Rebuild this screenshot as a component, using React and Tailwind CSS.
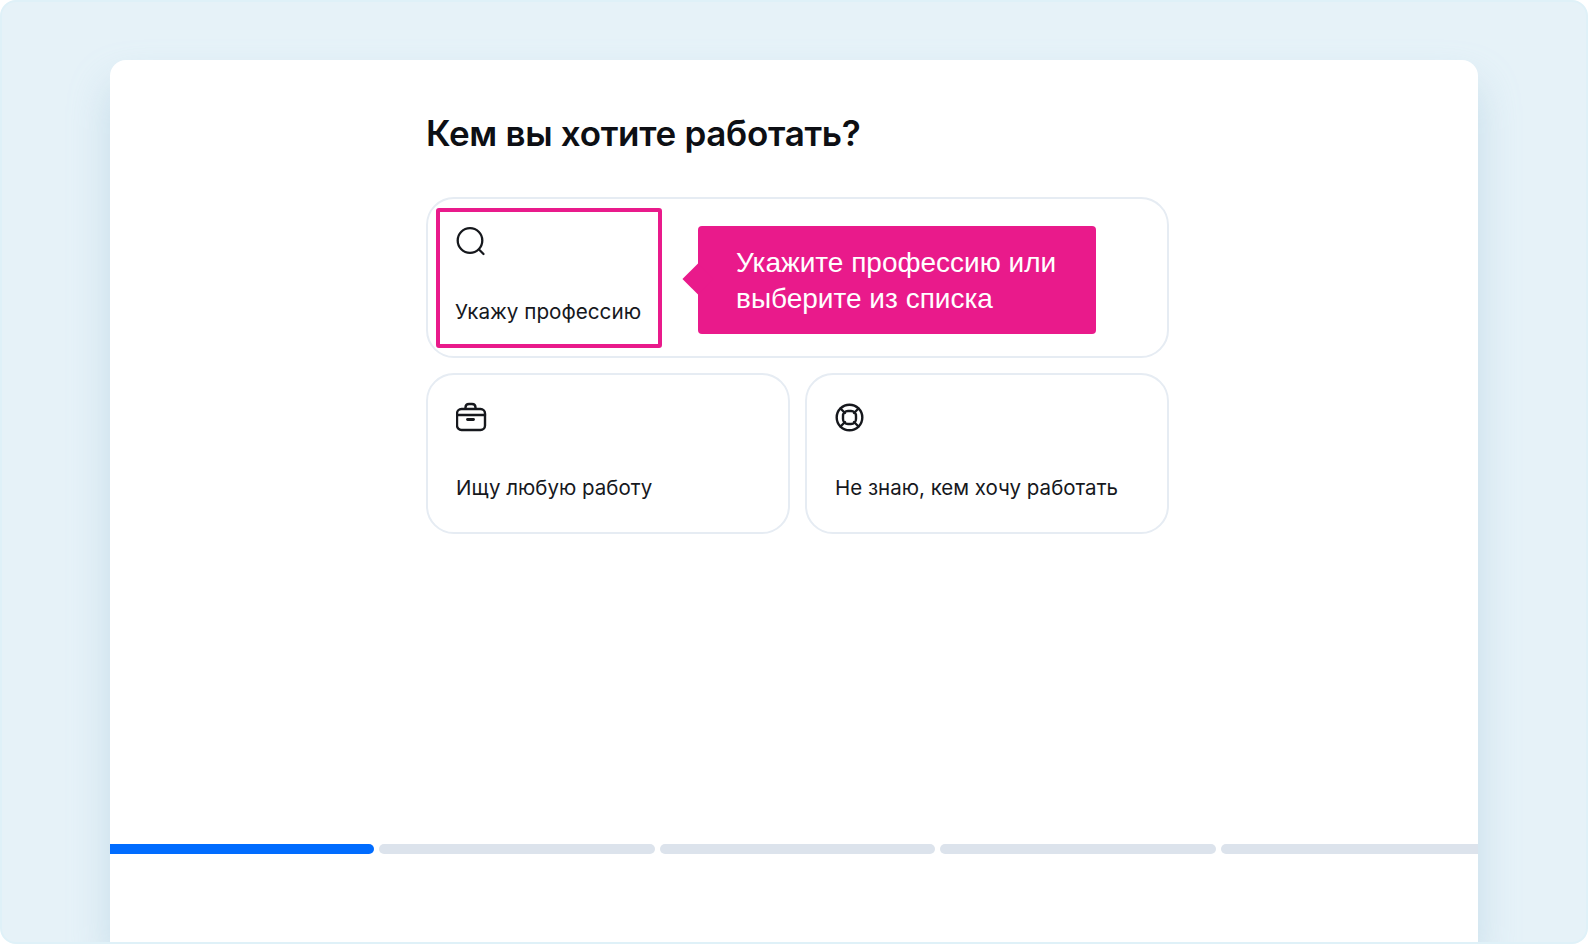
const SearchIcon = () => (
  <svg width="32" height="32" viewBox="0 0 32 32" fill="none" stroke="#16181d" strokeWidth="2.3" strokeLinecap="round">
    <circle cx="15" cy="14.500" r="12.300" />
    <path d="M24.500 24l4 4" />
  </svg>
);

const CaseIcon = () => (
  <svg width="32" height="32" viewBox="0 0 32 32" fill="none" stroke="#16181d" strokeWidth="2.4" strokeLinecap="round" strokeLinejoin="round">
    <path d="M9.500 7.500V6.500C9.500 4.500 11 3 13 3h3c2 0 3.500 1.500 3.500 3.500v1" />
    <rect x="1" y="8" width="28" height="21" rx="4.500" />
    <path d="M1 14h28" />
    <path d="M11.500 18.500h6" strokeWidth="2.800" />
  </svg>
);

const HelpIcon = () => (
  <svg width="32" height="32" viewBox="0 0 32 32" fill="none" stroke="#16181d" strokeWidth="2.4" strokeLinecap="round">
    <circle cx="14.500" cy="16.500" r="12.800" />
    <rect x="8" y="10" width="13" height="13" rx="5" />
    <path d="M5.500 7.500l4.500 4.500M23.500 7.500L19 12M5.500 25.500l4.500-4.500M23.500 25.500L19 21" />
  </svg>
);

function Option({ icon, label }) {
  return (
    <div className="flex-1 h-[161px] rounded-[28px] border-2 border-[#e6ecf3] pt-[26px] pl-[28px] flex flex-col">
      <div className="h-[32px]">{icon}</div>
      <div className="mt-[41px] text-[20.5px] leading-[28px] text-[#16181d]">{label}</div>
    </div>
  );
}

export default function App() {
  return (
    <div className="h-[944px] w-[1588px] overflow-hidden rounded-[16px] border-[2px] border-[#dff1f8] bg-[#e6f2f8] font-['Inter','Noto_Sans',sans-serif]">
      <div className="ml-[108px] mr-[108px] mt-[58px] h-[882px] rounded-t-[16px] bg-white shadow-[0_24px_40px_rgba(150,190,215,0.4)] overflow-hidden flex flex-col">
        <div className="w-[743px] ml-[316px] pt-[51px]">
          <h1 className="text-[35px] leading-[44px] font-semibold text-[#0d0f14] tracking-[-0.3px]">Кем вы хотите работать?</h1>

          <div className="mt-[42px] h-[161px] rounded-[28px] border-2 border-[#e6ecf3] flex items-center pl-[8px]">
            <div className="w-[226px] h-[140px] rounded-[3px] border-[4px] border-[#e91a8b] pt-[14px] pl-[15px] flex flex-col">
              <SearchIcon />
              <div className="mt-[40px] text-[20.700px] leading-[28px] text-[#16181d] whitespace-nowrap">Укажу профессию</div>
            </div>
            <div className="relative ml-[36px] mt-[4px] w-[398px] h-[108px] rounded-[4px] bg-[#e91a8b] pl-[38px] pt-[19px] text-[28px] leading-[36px] text-white font-['Liberation_Sans',sans-serif]">
              <span className="absolute left-[-11px] top-[42px] h-[22px] w-[22px] rotate-45 bg-[#e91a8b]" />
              <span className="relative">Укажите профессию или<br />выберите из списка</span>
            </div>
          </div>

          <div className="mt-[15px] flex gap-[15px]">
            <Option icon={<CaseIcon />} label="Ищу любую работу" />
            <Option icon={<HelpIcon />} label="Не знаю, кем хочу работать" />
          </div>
        </div>

        <div className="mt-[310px] flex gap-[5px] h-[10px] w-[1400px] shrink-0">
          <div className="w-[264px] rounded-r-full bg-[#006cff]" />
          <div className="w-[275.500px] rounded-full bg-[#dce3ec]" />
          <div className="w-[275.500px] rounded-full bg-[#dce3ec]" />
          <div className="w-[275.500px] rounded-full bg-[#dce3ec]" />
          <div className="w-[275.500px] rounded-full bg-[#dce3ec]" />
        </div>
      </div>
    </div>
  );
}
